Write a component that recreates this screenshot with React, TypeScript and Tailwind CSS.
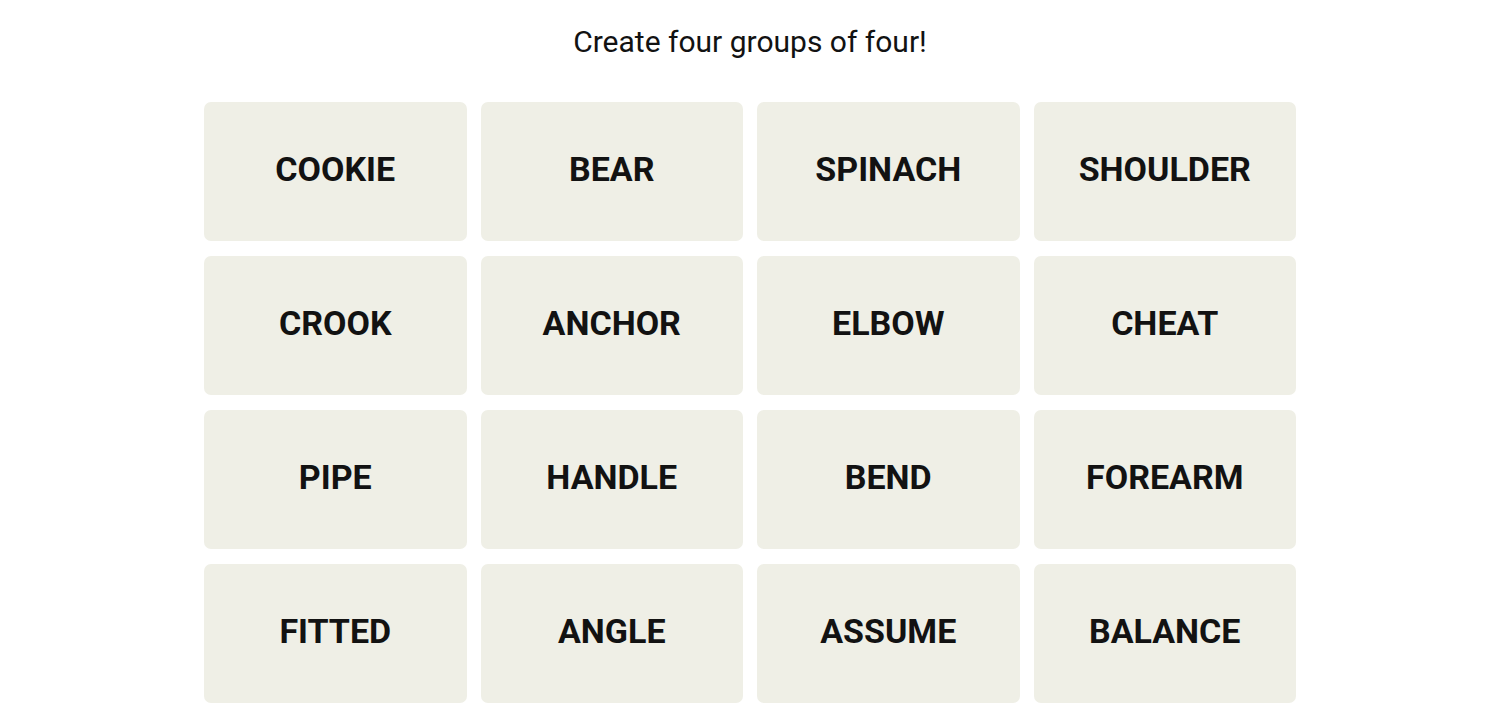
const words = [
  'COOKIE', 'BEAR', 'SPINACH', 'SHOULDER',
  'CROOK', 'ANCHOR', 'ELBOW', 'CHEAT',
  'PIPE', 'HANDLE', 'BEND', 'FOREARM',
  'FITTED', 'ANGLE', 'ASSUME', 'BALANCE',
];

export default function App() {
  return (
    <div className="min-h-screen bg-white flex flex-col items-center font-['Roboto',sans-serif] text-[#121212]">
      <p className="mt-[24px] text-[30px] leading-[36px] font-normal">Create four groups of four!</p>
      <div className="mt-[42px] w-[1092px] grid grid-cols-4 gap-x-[14px] gap-y-[15px]">
        {words.map((w) => (
          <button
            key={w}
            className="h-[139px] pb-[5px] rounded-[7px] bg-[#efefe6] flex items-center justify-center text-[34px] font-bold"
          >
            {w}
          </button>
        ))}
      </div>
    </div>
  );
}
